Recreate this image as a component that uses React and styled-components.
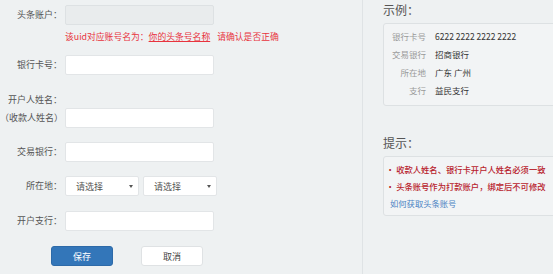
import React from 'react'
import styled, { createGlobalStyle } from 'styled-components'

const GlobalStyle = createGlobalStyle`
  html, body {
    margin: 0;
    padding: 0;
    background: #eef1f2;
    overflow: hidden;
  }
  body {
    font-family: "Noto Sans CJK SC", "Noto Sans", sans-serif;
    color: #555;
  }
`

const Page = styled.div`
  display: flex;
  width: 553px;
  height: 274px;
  overflow: hidden;
`

const FormCol = styled.div`
  width: 363px;
  flex-shrink: 0;
  border-right: 1px solid #dfe3e5;
  display: flex;
  flex-direction: column;
  padding-top: 5px;
  box-sizing: border-box;
`

const Row = styled.div`
  display: flex;
  align-items: center;
  gap: 3px;
  margin-top: ${p => p.$top || 0}px;
`

const Label = styled.div`
  width: 62px;
  flex-shrink: 0;
  text-align: right;
  font-size: 9px;
  line-height: 12px;
  color: #555;
  white-space: nowrap;
`

const Input = styled.div`
  width: 149px;
  height: 20px;
  box-sizing: border-box;
  border: 1px solid ${p => (p.$disabled ? '#dde1e3' : '#e2e5e7')};
  background: ${p => (p.$disabled ? '#e9eced' : '#fff')};
  border-radius: 2px;
`

const Hint = styled.div`
  margin: 6px 0 0 65px;
  font-size: 8.8px;
  line-height: 12px;
  color: #e8343e;
  white-space: nowrap;
`

const HintLink = styled.span`
  text-decoration: underline;
  margin-right: 7px;
`

const Selects = styled.div`
  display: flex;
  gap: 4px;
`

const Select = styled.div`
  width: 74px;
  height: 20px;
  box-sizing: border-box;
  border: 1px solid #e2e5e7;
  background: #fff;
  border-radius: 2px;
  display: flex;
  align-items: center;
  justify-content: space-between;
  padding: 0 5px 0 10px;
  font-size: 9px;
  color: #555;
`

const Caret = styled.span`
  width: 0;
  height: 0;
  border-left: 2px solid transparent;
  border-right: 2px solid transparent;
  border-top: 3px solid #555;
`

const Buttons = styled.div`
  display: flex;
  gap: 28px;
  margin: 15px 0 0 51px;
`

const Button = styled.div`
  width: 62px;
  height: 20px;
  box-sizing: border-box;
  border-radius: 3px;
  display: flex;
  align-items: center;
  justify-content: center;
  font-size: 9px;
  background: ${p => (p.$primary ? '#3376b9' : '#fff')};
  color: ${p => (p.$primary ? '#fff' : '#444')};
  border: 1px solid ${p => (p.$primary ? '#2d6aa8' : '#dfe2e4')};
`

const SideCol = styled.div`
  flex: 1;
  padding: 3px 0 0 20px;
  display: flex;
  flex-direction: column;
`

const SideTitle = styled.div`
  font-size: 12px;
  line-height: 14px;
  color: #555;
  margin-top: ${p => p.$top || 0}px;
`

const Panel = styled.div`
  width: 200px;
  box-sizing: border-box;
  margin-top: 6px;
  border: 1px solid #dde1e3;
  border-radius: 3px;
  background: #f2f4f5;
  padding: ${p => p.$pad};
`

const ExRow = styled.div`
  display: flex;
  gap: 9px;
  font-size: 8.5px;
  line-height: 18px;
`

const ExLabel = styled.span`
  width: 42px;
  text-align: right;
  color: #9a9a9a;
`

const ExValue = styled.span`
  color: #333;
`

const Tip = styled.div`
  font-size: 8.3px;
  line-height: 17px;
  color: ${p => (p.$link ? '#4a83c3' : '#b8222c')};
  font-weight: ${p => (p.$link ? 400 : 500)};
  padding-left: ${p => (p.$link ? 6 : 2)}px;
  white-space: nowrap;
`

const example = [
  ['银行卡号', '6222 2222 2222 2222'],
  ['交易银行', '招商银行'],
  ['所在地', '广东 广州'],
  ['支行', '益民支行'],
]

export default function App() {
  return (
    <>
      <GlobalStyle />
      <Page>
        <FormCol>
          <Row>
            <Label>头条账户：</Label>
            <Input $disabled />
          </Row>
          <Hint>
            该uid对应账号名为：<HintLink>你的头条号名称</HintLink>请确认是否正确
          </Hint>
          <Row $top={12}>
            <Label>银行卡号：</Label>
            <Input />
          </Row>
          <Row $top={19}>
            <Label>开户人姓名：</Label>
          </Row>
          <Row $top={2}>
            <Label>（收款人姓名）</Label>
            <Input />
          </Row>
          <Row $top={14}>
            <Label>交易银行：</Label>
            <Input />
          </Row>
          <Row $top={14}>
            <Label>所在地：</Label>
            <Selects>
              <Select>请选择<Caret /></Select>
              <Select>请选择<Caret /></Select>
            </Selects>
          </Row>
          <Row $top={15}>
            <Label>开户支行：</Label>
            <Input />
          </Row>
          <Buttons>
            <Button $primary>保存</Button>
            <Button>取消</Button>
          </Buttons>
        </FormCol>
        <SideCol>
          <SideTitle>示例：</SideTitle>
          <Panel $pad="3px 0 6px 0">
            {example.map(([k, v]) => (
              <ExRow key={k}>
                <ExLabel>{k}</ExLabel>
                <ExValue>{v}</ExValue>
              </ExRow>
            ))}
          </Panel>
          <SideTitle $top={30}>提示：</SideTitle>
          <Panel $pad="4px 0 3px 0">
            <Tip>· 收款人姓名、银行卡开户人姓名必须一致</Tip>
            <Tip>· 头条账号作为打款账户，绑定后不可修改</Tip>
            <Tip $link>如何获取头条账号</Tip>
          </Panel>
        </SideCol>
      </Page>
    </>
  )
}
